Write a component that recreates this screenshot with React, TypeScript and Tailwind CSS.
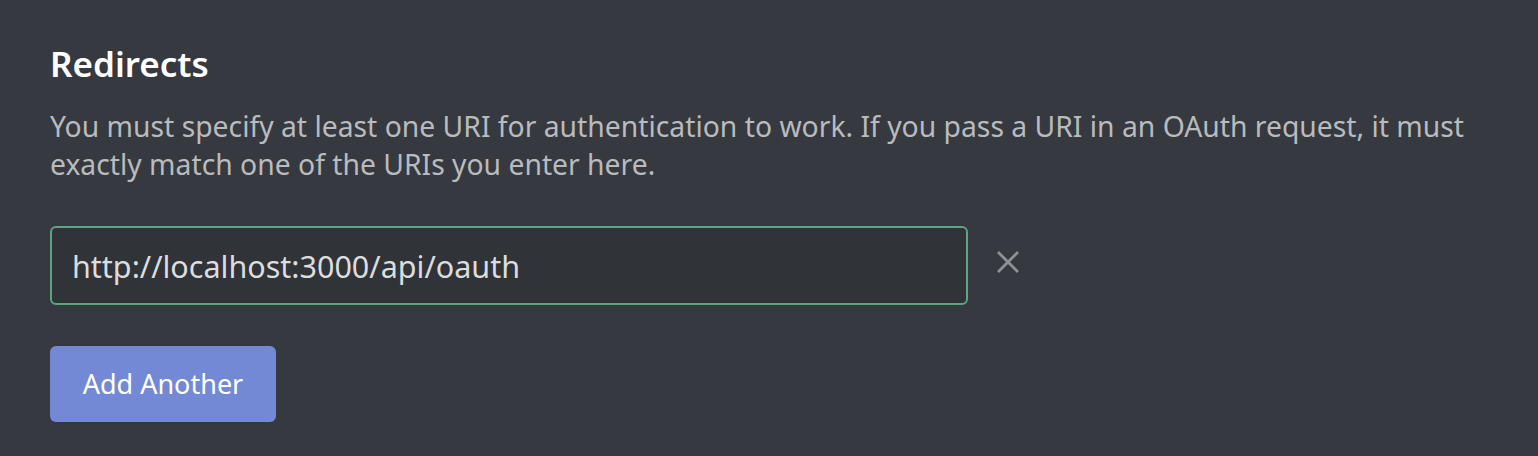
import React, { useState } from 'react';

const App: React.FC = () => {
  const [uris, setUris] = useState<string[]>(['http://localhost:3000/api/oauth']);

  const handleChange = (i: number, value: string) => {
    setUris(prev => prev.map((u, idx) => (idx === i ? value : u)));
  };

  const handleRemove = (i: number) => {
    setUris(prev => prev.filter((_, idx) => idx !== i));
  };

  return (
    <div className="min-h-screen w-full bg-[#36393f] pl-[50px] pt-[44px] font-['Noto_Sans',sans-serif]">
      <h2 className="text-[35px] leading-[40px] font-semibold text-white">Redirects</h2>
      <p className="mt-[23px] w-[1440px] text-[28.3px] leading-[38px] text-[#b9bbbe]">
        You must specify at least one URI for authentication to work. If you pass a URI in an OAuth request, it must
        exactly match one of the URIs you enter here.
      </p>

      <div className="mt-[43px] flex flex-col gap-4">
        {uris.map((uri, i) => (
          <div key={i} className="flex items-center gap-[28px]">
            <input
              className="h-[79px] w-[918px] rounded-[6px] border-2 border-[#5ba57f] bg-[#303338] px-[20px] text-[30.5px] text-[#dcddde] outline-none"
              value={uri}
              onChange={e => handleChange(i, e.target.value)}
            />
            <button onClick={() => handleRemove(i)} className="mb-[8px] text-[#8e9297] hover:text-white">
              <svg width="24" height="24" viewBox="0 0 24 24" fill="none" stroke="currentColor" strokeWidth="2.8">
                <path d="M2 2 L22 22 M22 2 L2 22" />
              </svg>
            </button>
          </div>
        ))}
      </div>

      <button
        onClick={() => setUris(prev => [...prev, ''])}
        className="mt-[41px] h-[76px] w-[226px] rounded-[6px] bg-[#7389d6] text-[27px] text-white"
      >
        Add Another
      </button>
    </div>
  );
};

export default App;
